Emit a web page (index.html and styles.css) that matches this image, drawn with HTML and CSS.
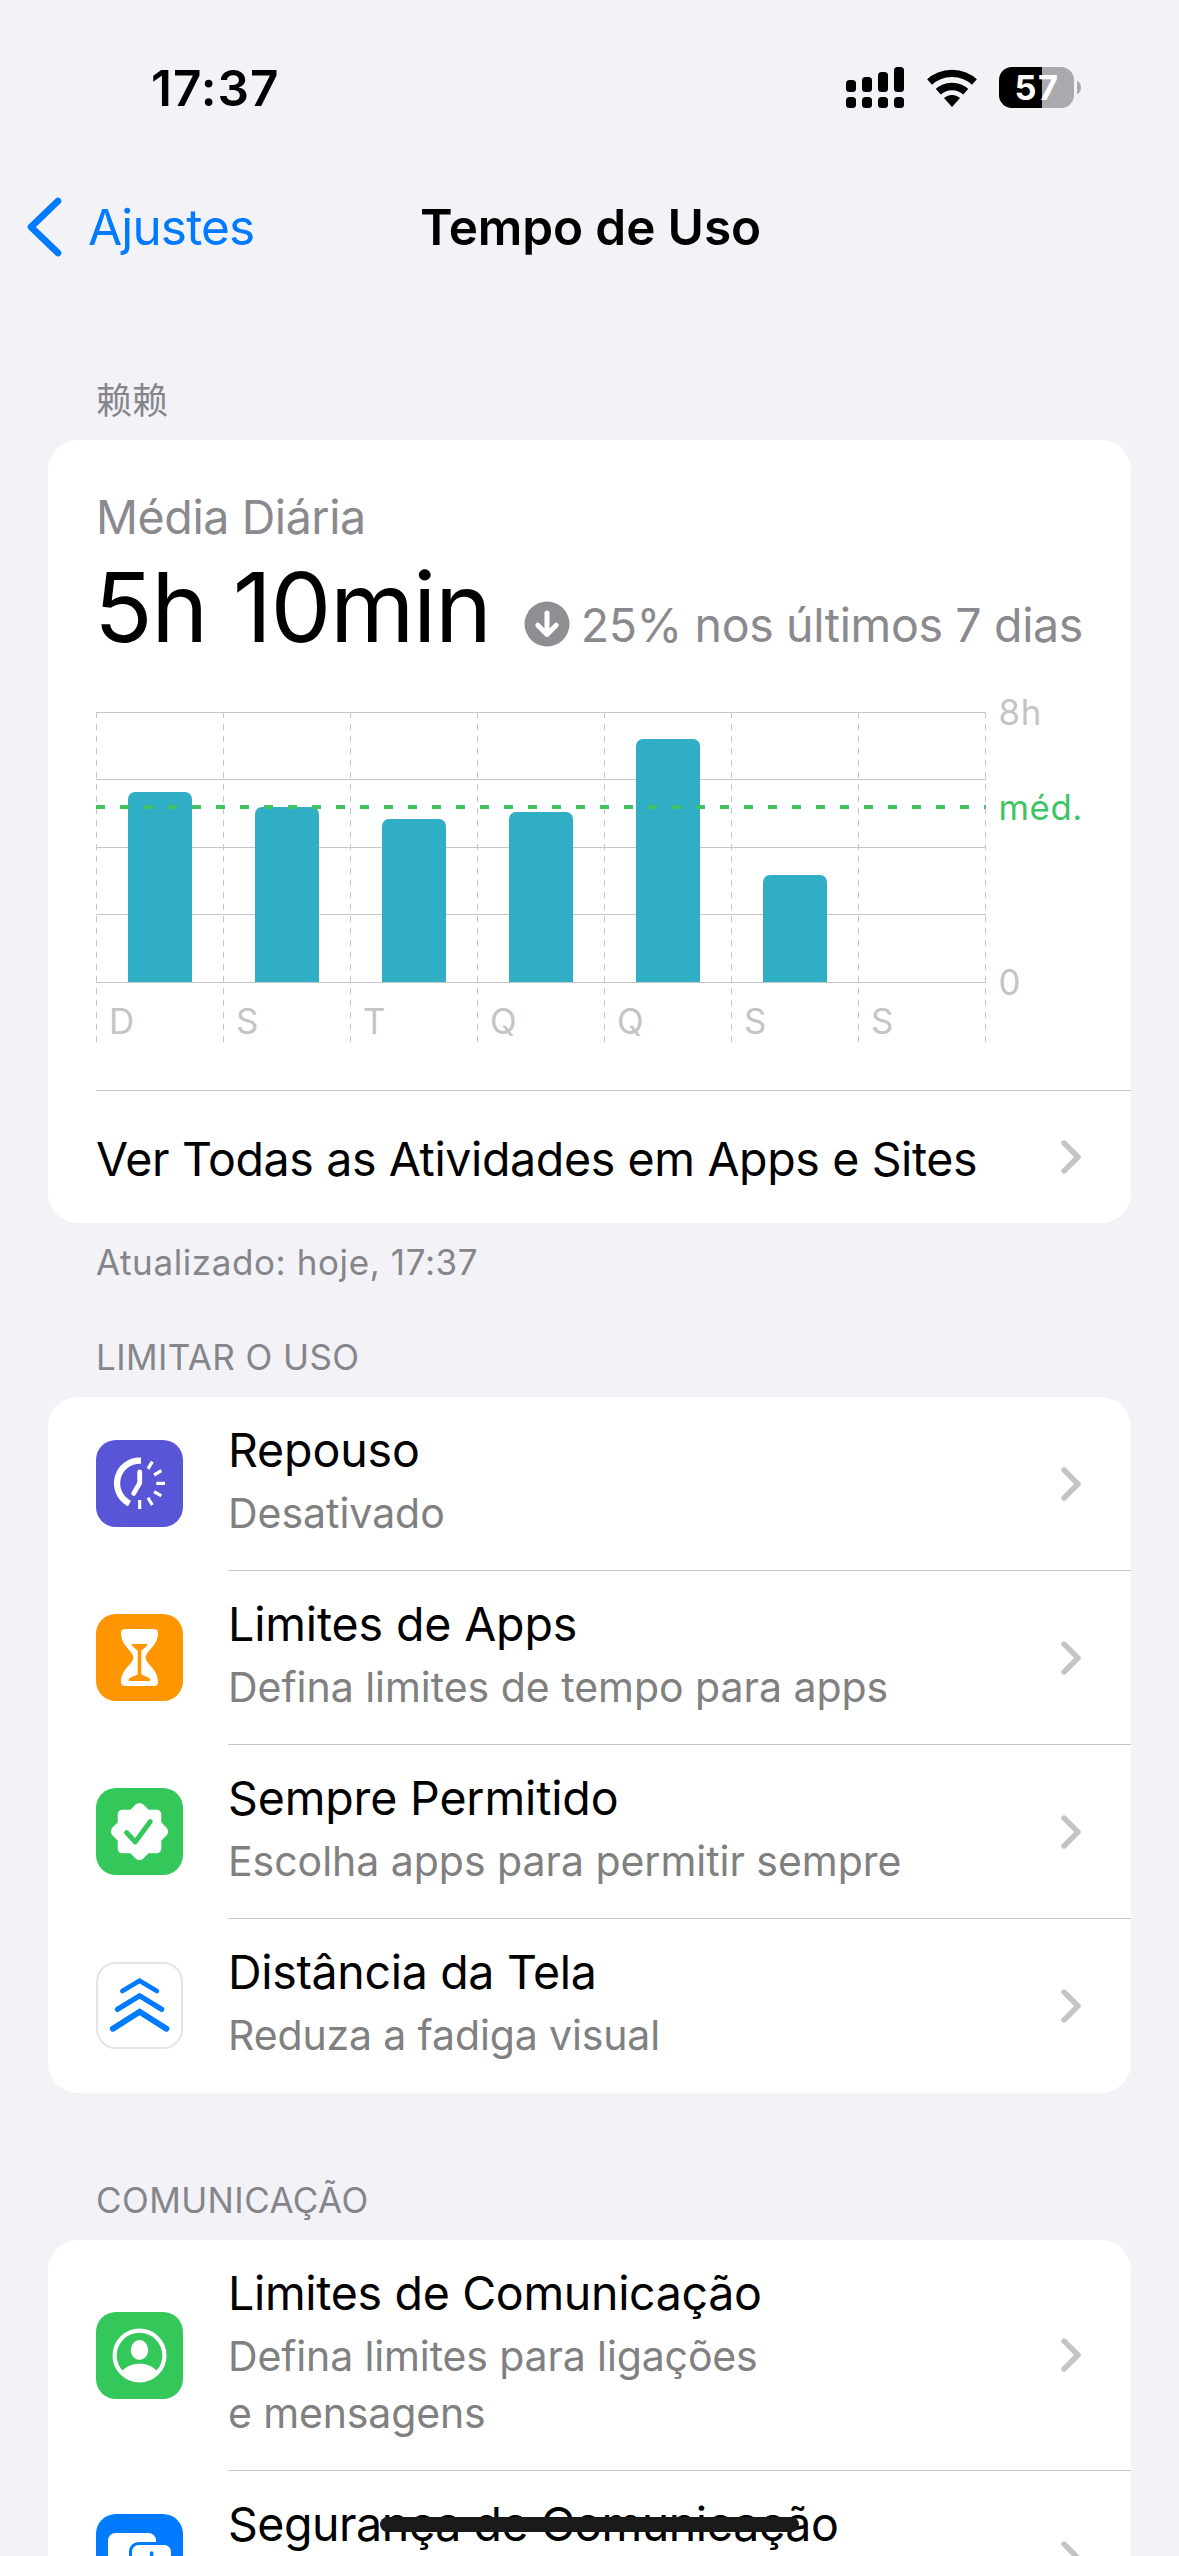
FILE: index.html
```html
<!DOCTYPE html>
<html lang="pt-BR">
<head>
<meta charset="utf-8">
<title>Tempo de Uso</title>
<link rel="stylesheet" href="styles.css">
</head>
<body>
<svg class="defs" aria-hidden="true">
  <symbol id="chevron" viewBox="0 0 20 34"><path d="M3 3 17 17 3 31" fill="none" stroke="#c4c4c6" stroke-width="5.4" stroke-linecap="round" stroke-linejoin="round"/></symbol>
</svg>
<div class="screen">
  <header class="status">
    <span class="time">17:37</span>
    <div class="indicators">
      <svg class="signal" width="58" height="41" viewBox="0 0 58 41">
        <rect x="0" y="13" width="10" height="12" rx="3.5"/><rect x="16" y="10" width="10" height="15" rx="3.5"/><rect x="32" y="5" width="10" height="20" rx="3.5"/><rect x="48" y="0" width="10" height="25" rx="3.5"/>
        <rect x="0" y="30" width="10" height="11" rx="3.5"/><rect x="16" y="30" width="10" height="11" rx="3.5"/><rect x="32" y="30" width="10" height="11" rx="3.5"/><rect x="48" y="30" width="10" height="11" rx="3.5"/>
      </svg>
      <svg class="wifi" width="52" height="38" viewBox="0 0 52 38">
        <clipPath id="fan"><path d="M26 38 -9 -1 V-10 H61 V-1Z"/></clipPath>
        <g clip-path="url(#fan)"><circle cx="26" cy="38" r="33.6" fill="none" stroke="#000" stroke-width="7.4"/><circle cx="26" cy="38" r="20.5" fill="none" stroke="#000" stroke-width="7.6"/><circle cx="26" cy="38" r="12"/></g>
      </svg>
      <div class="battery"><span class="level">57</span><i class="nub"></i></div>
    </div>
  </header>

  <nav class="nav">
    <a class="back"><svg width="36" height="60" viewBox="0 0 36 60"><path d="M32 4 5 30 32 56" fill="none" stroke="#007aff" stroke-width="6.6" stroke-linecap="round" stroke-linejoin="round"/></svg><span>Ajustes</span></a>
    <h1>Tempo de Uso</h1>
  </nav>

  <main>
    <h2 class="label first">赖赖</h2>
    <section class="card">
      <div class="summary">
        <p class="caption">Média Diária</p>
        <div class="figures">
          <span class="total">5h 10min</span>
          <span class="trend"><svg width="46" height="46" viewBox="0 0 46 46"><circle cx="23" cy="23" r="22.5" fill="#8e8e93"/><path d="M23 12V33M13.8 24.2 23 33.4 32.2 24.2" fill="none" stroke="#fff" stroke-width="5" stroke-linecap="round" stroke-linejoin="round"/></svg>25% nos últimos 7 dias</span>
        </div>
        <div class="chart">
          <div class="plot">
            <div class="day"><div class="slot"><i style="height:190px"></i></div><span>D</span></div>
            <div class="day"><div class="slot"><i style="height:175px"></i></div><span>S</span></div>
            <div class="day"><div class="slot"><i style="height:163px"></i></div><span>T</span></div>
            <div class="day"><div class="slot"><i style="height:170px"></i></div><span>Q</span></div>
            <div class="day"><div class="slot"><i style="height:243px"></i></div><span>Q</span></div>
            <div class="day"><div class="slot"><i style="height:107px"></i></div><span>S</span></div>
            <div class="day"><div class="slot"></div><span>S</span></div>
            <div class="average"></div>
          </div>
          <div class="axis"><span>8h</span><span class="avg">méd.</span><span>0</span></div>
        </div>
      </div>
      <a class="link"><span>Ver Todas as Atividades em Apps e Sites</span><svg class="go"><use href="#chevron"/></svg></a>
    </section>
    <p class="label note">Atualizado: hoje, 17:37</p>

    <h2 class="label">LIMITAR O USO</h2>
    <section class="card">
      <a class="row">
        <svg class="icon" viewBox="0 0 87 87"><rect width="87" height="87" rx="20" fill="#5856d6"/>
          <g fill="none" stroke="#fff"><path d="M45 20.7H43.7A22.6 22.6 0 0 0 32.4 62.900L33.500 63.500" stroke-width="6.3"/>
          <path d="M43.7 32V43L37.7 53.4" stroke-width="4.8" stroke-linecap="round" stroke-linejoin="round"/>
          <path d="M52 28.9 56.3 21.6M58.1 35 65.4 30.7M60.3 43.3H69M58.1 51.7 65.4 55.9M52 57.8 56.3 65M43.7 60V69" stroke-width="3.2"/></g></svg>
        <div class="text"><strong>Repouso</strong><span>Desativado</span></div><svg class="go"><use href="#chevron"/></svg>
      </a>
      <a class="row">
        <svg class="icon" viewBox="0 0 87 87"><rect width="87" height="87" rx="20" fill="#ff9500"/>
          <path fill="#fff" d="M29 15H58Q62 15 62 19C62 32 49.7 37 49.7 43.5S62 55 62 68Q62 72 58 72H29Q25 72 25 68C25 55 37.3 50 37.3 43.5S25 32 25 19Q25 15 29 15Z"/>
          <path fill="#ff9500" d="M36.5 30H50.5Q52 30 51 31.5 49 34 45.3 36.5V60.5C50 62.5 54.5 64 54.5 66Q54.5 67 53 67H34Q32.5 67 32.5 66C32.5 64 37 62.5 41.7 60.5V36.5Q38 34 36 31.5 35 30 36.5 30Z"/></svg>
        <div class="text"><strong>Limites de Apps</strong><span>Defina limites de tempo para apps</span></div><svg class="go"><use href="#chevron"/></svg>
      </a>
      <a class="row">
        <svg class="icon" viewBox="0 0 87 87"><rect width="87" height="87" rx="20" fill="#34c759"/>
          <g fill="#fff"><rect x="21.7" y="21.7" width="43.6" height="43.6" rx="4.5"/><rect x="21.7" y="21.7" width="43.6" height="43.6" rx="5.5" transform="rotate(45 43.5 43.5)"/></g>
          <path d="M30.5 44.5 39.3 54 54.3 33.5" fill="none" stroke="#34c759" stroke-width="4.8" stroke-linecap="round" stroke-linejoin="round"/></svg>
        <div class="text"><strong>Sempre Permitido</strong><span>Escolha apps para permitir sempre</span></div><svg class="go"><use href="#chevron"/></svg>
      </a>
      <a class="row tight">
        <svg class="icon" viewBox="0 0 87 87"><rect x="1" y="1" width="85" height="85" rx="19" fill="#fff" stroke="#e4e4e6" stroke-width="2"/>
          <g fill="none" stroke="#007aff" stroke-linecap="round"><path d="M26.4 29 43.6 18.8 60.8 29" stroke-width="4.8"/><path d="M21.6 47.3 43.6 33.8 65.6 47.3" stroke-width="5.4"/><path d="M16.9 66.7 43.6 49.8 70.4 66.7" stroke-width="6"/></g></svg>
        <div class="text"><strong>Distância da Tela</strong><span>Reduza a fadiga visual</span></div><svg class="go"><use href="#chevron"/></svg>
      </a>
    </section>

    <h2 class="label spaced">COMUNICAÇÃO</h2>
    <section class="card">
      <a class="row tight">
        <svg class="icon" viewBox="0 0 87 87"><rect width="87" height="87" rx="20" fill="#34c759"/>
          <circle cx="43.5" cy="43.5" r="24.9" fill="none" stroke="#fff" stroke-width="4.2"/>
          <ellipse cx="43.5" cy="38" rx="8.7" ry="10" fill="#fff"/>
          <path d="M25.5 59.5C34 49 53 49 61.5 59.5A24 24 0 0 1 25.5 59.5Z" fill="#fff"/></svg>
        <div class="text"><strong>Limites de Comunicação</strong><span>Defina limites para ligações<br>e mensagens</span></div><svg class="go"><use href="#chevron"/></svg>
      </a>
      <a class="row last">
        <svg class="icon" viewBox="0 0 87 87"><rect width="87" height="87" rx="20" fill="#007aff"/>
          <rect x="12" y="19" width="48" height="34" rx="7.5" fill="#fff"/>
          <rect x="34.5" y="29.5" width="42" height="34" rx="8" fill="#fff" stroke="#007aff" stroke-width="3"/>
          <path d="M55.6 39V52M49 45.5H62" stroke="#007aff" stroke-width="3.5" stroke-linecap="round"/></svg>
        <div class="text"><strong>Segurança de Comunicação</strong></div><svg class="go"><use href="#chevron"/></svg>
      </a>
    </section>
  </main>
  <div class="home"></div>
</div>
</body>
</html>
```
FILE: styles.css
```css
* { box-sizing: border-box; }
body { margin: 0; }
h1, h2, p { margin: 0; font-weight: 400; }
.defs { position: absolute; width: 0; height: 0; }

.screen {
  position: relative;
  width: 1179px;
  height: 2556px;
  overflow: hidden;
  background: #f2f2f7;
  color: #000;
  font-family: Inter, "Noto Sans CJK SC", sans-serif;
  font-size: 46.5px;
}

/* status bar */
.status { height: 176px; padding: 0 98px 0 151px; display: flex; align-items: center; justify-content: space-between; }
.time { font-size: 49.5px; font-weight: 600; letter-spacing: 1px; line-height: 60px; }
.indicators { display: flex; align-items: center; padding-bottom: 1px; }
.wifi { margin: 0 21px 0 22px; }
.battery { display: flex; align-items: center; }
.level {
  width: 75px; height: 41px; border-radius: 13px;
  background: linear-gradient(90deg, #000 43px, #a9a9ae 43px);
  color: #fff; font-size: 34.5px; font-weight: 700; line-height: 41px; letter-spacing: 1.5px; text-align: center; padding-left: 1px;
}
.nub { width: 4px; height: 13px; margin-left: 3px; border-radius: 0 4px 4px 0 / 0 6.5px 6.5px 0; background: #a9a9ae; }

/* navigation bar */
.nav { height: 102px; display: grid; grid-template-columns: 1fr auto 1fr; align-items: center; padding-left: 26px; padding-right: 24px; font-size: 49.5px; line-height: 60px; }
.back { display: flex; align-items: center; gap: 26px; color: #007aff; letter-spacing: -.85px; }
.nav h1 { font-size: 49.5px; font-weight: 600; letter-spacing: -.13px; }

/* section labels */
.label { padding: 0 96px; height: 40px; margin: 55px 0 20px; font-size: 35px; line-height: 40px; letter-spacing: .4px; color: #85858b; }
.label.first { margin-top: 103px; margin-bottom: 19px; font-size: 36px; letter-spacing: 0; }
.label.note { margin: 19px 0 0; letter-spacing: .6px; }
.label.spaced { margin-top: 87px; }

.card { margin: 0 48px; background: #fff; border-radius: 30px; overflow: hidden; }

/* daily average */
.summary { height: 650px; padding: 49px 48px 0; }
.caption { line-height: 56px; color: #8a8a8e; letter-spacing: -.4px; }
.figures { margin: 12px 0 0 -2px; height: 100px; display: flex; align-items: baseline; justify-content: space-between; line-height: 100px; }
.total { font-size: 96.5px; letter-spacing: -1.41px; }
.trend { color: #8a8a8e; letter-spacing: -.36px; white-space: nowrap; }
.trend svg { margin-right: 11px; vertical-align: -5px; }

.chart { margin-top: 55px; display: flex; gap: 13px; font-size: 34.8px; color: #c4c4c6; }
.plot {
  position: relative; width: 890px; height: 330px; display: grid; grid-template-columns: repeat(7, 127px);
  background:
    linear-gradient(#c6c6c8, #c6c6c8) 0 0 / 100% 1px,
    linear-gradient(#c6c6c8, #c6c6c8) 0 67px / 100% 1px,
    linear-gradient(#c6c6c8, #c6c6c8) 0 135px / 100% 1px,
    linear-gradient(#c6c6c8, #c6c6c8) 0 202px / 100% 1px,
    linear-gradient(#c6c6c8, #c6c6c8) 0 270px / 100% 1px,
    linear-gradient(#c6c6c8 6px, transparent 6px) 100% 0 / 1px 12px;
  background-repeat: no-repeat, no-repeat, no-repeat, no-repeat, no-repeat, repeat-y;
}
.day { background: linear-gradient(#c6c6c8 6px, transparent 6px) 0 0 / 1px 12px repeat-y; }
.slot { height: 270px; display: flex; align-items: flex-end; justify-content: center; }
.slot i { width: 64px; border-radius: 7px 7px 0 0; background: #30aec6; }
.day span { display: block; margin-top: 19px; padding-left: 13px; line-height: 40px; }
.average { position: absolute; left: 0; top: 93px; width: 100%; height: 4px; background: repeating-linear-gradient(90deg, #40c463 0 9px, transparent 9px 24px); }
.axis { margin-top: -18px; display: flex; flex-direction: column; line-height: 36px; letter-spacing: .6px; }
.axis .avg { margin: 59px 0 139px; color: #40c463; }

.link { display: flex; align-items: center; justify-content: space-between; height: 133px; margin-left: 48px; padding: 0 50px 0 0; border-top: 1px solid #c6c6c8; letter-spacing: -.37px; }
.link span { line-height: 56px; padding-top: 4px; }
.go { width: 20px; height: 34px; flex: none; }

/* setting rows */
.row { display: flex; align-items: center; padding-left: 48px; position: relative; }
.icon { width: 87px; height: 87px; flex: none; margin-right: 45px; }
.text { flex: 1; padding: 24px 0 28.4px; border-bottom: 1px solid #c6c6c8; }
.row:last-child .text { border-color: transparent; }
.text strong { display: block; font-weight: 400; line-height: 58px; letter-spacing: -.14px; }
.text span { display: block; margin-top: 5.6px; font-size: 41px; line-height: 57px; color: #808080; letter-spacing: -.03px; }
.tight strong { letter-spacing: -.32px; }
.tight span { letter-spacing: -.13px; }
.row.last { height: 174px; }
.last .text { align-self: flex-start; }
.last strong { letter-spacing: -.48px; }
.row .go { position: absolute; right: 50px; top: calc(50% - 17px); }

.home { position: absolute; left: 380px; top: 2517px; width: 419px; height: 15px; border-radius: 8px; background: #1a1a1a; }
```
